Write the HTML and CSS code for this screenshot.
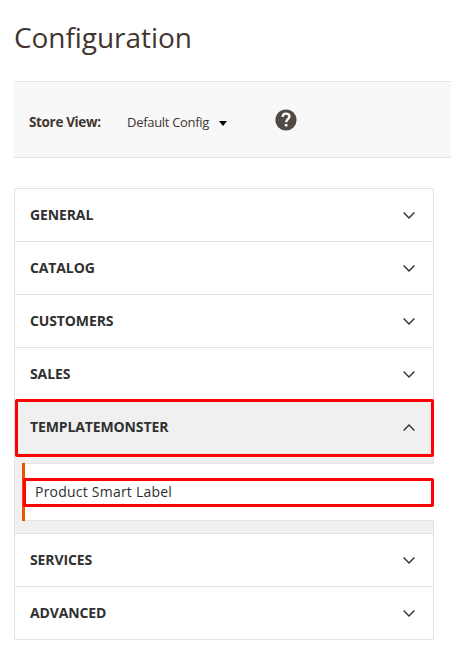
FILE: index.html
```html
<!DOCTYPE html>
<html lang="en">
<head>
<meta charset="utf-8">
<title>Configuration</title>
<link rel="stylesheet" href="styles.css">
</head>
<body>
<h1 class="page-title">Configuration</h1>
<div class="toolbar">
  <span class="store-label">Store View:</span>
  <button class="store-switch">Default Config<svg class="caret" width="8" height="5" viewBox="0 0 8 5"><path d="M0 0h8L4 5z"/></svg></button>
  <svg class="help" width="22" height="22" viewBox="0 0 22 22"><circle cx="11" cy="11" r="10.6" fill="#514943"/><path d="M7.6 7.8C7.8 5.6 9.2 4.6 11 4.6c2 0 3.4 1.1 3.4 2.9 0 2.6-3.2 2.8-3.2 5.7" fill="none" stroke="#f8f8f8" stroke-width="2.4"/><rect x="9.7" y="14.9" width="2.8" height="2.7" rx=".6" fill="#f8f8f8"/></svg>
</div>
<nav class="config-nav">
  <div class="section"><span>GENERAL</span><svg class="chevron" viewBox="0 0 12 7"><path d="M.6.6 6 5.9 11.4.6"/></svg></div>
  <div class="section"><span>CATALOG</span><svg class="chevron" viewBox="0 0 12 7"><path d="M.6.6 6 5.9 11.4.6"/></svg></div>
  <div class="section"><span>CUSTOMERS</span><svg class="chevron" viewBox="0 0 12 7"><path d="M.6.6 6 5.9 11.4.6"/></svg></div>
  <div class="section"><span>SALES</span><svg class="chevron" viewBox="0 0 12 7"><path d="M.6.6 6 5.9 11.4.6"/></svg></div>
  <div class="section open"><span>TEMPLATEMONSTER</span><svg class="chevron" viewBox="0 0 12 7"><path d="M.6 6.4 6 1.1 11.4 6.4"/></svg></div>
  <div class="submenu"><a class="subitem">Product Smart Label</a></div>
  <div class="section"><span>SERVICES</span><svg class="chevron" viewBox="0 0 12 7"><path d="M.6.6 6 5.9 11.4.6"/></svg></div>
  <div class="section"><span>ADVANCED</span><svg class="chevron" viewBox="0 0 12 7"><path d="M.6.6 6 5.9 11.4.6"/></svg></div>
</nav>
</body>
</html>
```
FILE: styles.css
```css
* { box-sizing: border-box; }
body {
  margin: 0;
  padding: 17px 0 0 14px;
  background: #fff;
  color: #303030;
  font-family: "Open Sans", "Noto Sans", sans-serif;
  overflow: hidden;
}
.page-title {
  margin: 0;
  height: 64px;
  font-size: 28px;
  line-height: 40px;
  font-weight: 400;
  letter-spacing: -.06px;
  color: #41362f;
}
.toolbar {
  display: flex;
  align-items: center;
  height: 77px;
  padding: 0 0 0 15px;
  background: #f8f8f8;
  border-top: 1px solid #e3e3e3;
  border-bottom: 1px solid #e3e3e3;
}
.store-label {
  width: 98px;
  padding-top: 4px;
  font-size: 13.5px;
  line-height: 20px;
  font-weight: 700;
  letter-spacing: -.35px;
  color: #41362f;
}
.store-switch {
  display: flex;
  align-items: center;
  width: 148px;
  padding: 4px 0 0;
  border: 0;
  background: none;
  font: 13px/20px "Open Sans", sans-serif;
  letter-spacing: -.3px;
  color: #41362f;
}
.caret { margin: 4px 0 0 9.5px; fill: #000; }
.help { margin-top: 1px; }
.config-nav {
  position: relative;
  width: 420px;
  margin-top: 30px;
  border: 1px solid #e3e3e3;
  border-bottom: 0;
}
.section {
  display: flex;
  align-items: center;
  justify-content: space-between;
  height: 53px;
  padding: 0 18px 0 15px;
  border-bottom: 1px solid #e3e3e3;
  font-size: 14px;
  line-height: 20px;
  font-weight: 700;
  letter-spacing: -.12px;
}
.chevron {
  width: 12px;
  height: 7px;
  fill: none;
  stroke: #303030;
  stroke-width: 1.4;
}
.open { position: relative; background: #f0f0f0; }
.open::after {
  content: "";
  position: absolute;
  inset: -2px -1px -4px 0;
  border: 3px solid #f00;
  border-radius: 2px;
}
.submenu {
  padding: 9px 0 12px 7px;
  background: #f0f0f0;
  border-bottom: 1px solid #e3e3e3;
}
.subitem {
  display: flex;
  align-items: center;
  position: relative;
  height: 58px;
  margin-right: -1px;
  padding: 0 0 2px 10px;
  border-left: 3px solid #eb5202;
  background: #fff;
  box-shadow: inset 0 1px #e3e3e3, inset 0 -1px #e3e3e3;
  font-size: 14px;
  font-weight: 500;
  letter-spacing: .22px;
}
.subitem::after {
  content: "";
  position: absolute;
  inset: 15px 0 14px -2px;
  border: 3px solid #f00;
  border-radius: 2px;
}
```
